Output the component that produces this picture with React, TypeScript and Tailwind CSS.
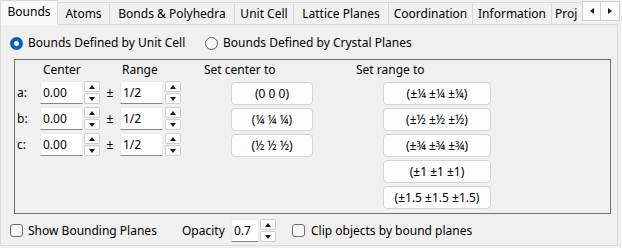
import React from "react";

const tabs = [
  { label: "Bounds", w: "w-[58px]" },
  { label: "Atoms", w: "w-[52px]" },
  { label: "Bonds & Polyhedra", w: "w-[125px]" },
  { label: "Unit Cell", w: "w-[59px]" },
  { label: "Lattice Planes", w: "w-[95px]" },
  { label: "Coordination", w: "w-[84px]" },
  { label: "Information", w: "w-[79px]" },
];

const Arrow: React.FC<{ dir: "up" | "down" | "left" | "right" }> = ({ dir }) => {
  const pts = {
    up: "0,4 3,0 6,4",
    down: "0,0 6,0 3,4",
    left: "4,0 4,6 0,3",
    right: "0,0 0,6 4,3",
  }[dir];
  const vertical = dir === "up" || dir === "down";
  return (
    <svg width={vertical ? 6 : 4} height={vertical ? 4 : 6} viewBox={vertical ? "0 0 6 4" : "0 0 4 6"}>
      <polygon points={pts} fill="#1a1a1a" />
    </svg>
  );
};

const Spin: React.FC = () => (
  <div className="flex flex-col gap-[1px] w-[16px] h-[23px]">
    <div className="h-[11px] flex items-center justify-center border border-[#cfcfcf] bg-[#fbfbfb] rounded-[2px]">
      <Arrow dir="up" />
    </div>
    <div className="h-[11px] flex items-center justify-center border border-[#cfcfcf] bg-[#fbfbfb] rounded-[2px]">
      <Arrow dir="down" />
    </div>
  </div>
);

const Field: React.FC<{ value: string; w: string }> = ({ value, w }) => (
  <div className={`${w} h-[23px] bg-white border border-[#ececec] border-b-[#868686] flex items-center pl-[2px]`}>
    {value}
  </div>
);

const Btn: React.FC<{ label: string; w: string }> = ({ label, w }) => (
  <div className={`${w} h-[23px] rounded-[4px] border border-[#d3d3d3] bg-[#fdfdfd] flex items-center justify-center`}>
    {label}
  </div>
);

const Check: React.FC = () => (
  <div className="w-[13px] h-[13px] rounded-[3px] border border-[#6f6f6f] bg-[#f7f7f7]" />
);

const rows = ["a:", "b:", "c:"];
const centers = ["(0 0 0)", "(¼ ¼ ¼)", "(½ ½ ½)"];
const ranges = ["(±¼ ±¼ ±¼)", "(±½ ±½ ±½)", "(±¾ ±¾ ±¾)", "(±1 ±1 ±1)", "(±1.5 ±1.5 ±1.5)"];

export default function App() {
  return (
    <div className="w-[622px] h-[248px] bg-[#f0f0f0] text-[12px] leading-[16px] text-black overflow-hidden font-['Noto_Sans',sans-serif]">
      {/* tab bar */}
      <div className="flex h-[24px] items-end">
        {tabs.map((t, i) =>
          i === 0 ? (
            <div
              key={t.label}
              className={`${t.w} h-[25px] -mb-px relative z-10 bg-[#f9f9f9] border border-b-0 border-[#d9d9d9] flex items-center justify-center pb-[2px]`}
            >
              {t.label}
            </div>
          ) : (
            <div
              key={t.label}
              className={`${t.w} h-[22px] border-t border-r border-[#d9d9d9] flex items-center justify-center`}
            >
              {t.label}
            </div>
          )
        )}
        <div className="w-[30px] h-[22px] border-t border-[#d9d9d9] flex items-center pl-[3px] whitespace-nowrap">
          Proj
        </div>
        <div className="self-start mt-[1px] flex relative z-10">
          <div className="w-[19px] h-[20px] bg-[#fbfbfb] border border-[#cfcfcf] flex items-center justify-center">
            <Arrow dir="left" />
          </div>
          <div className="w-[19px] h-[20px] bg-[#fbfbfb] border border-l-0 border-[#cfcfcf] flex items-center justify-center">
            <Arrow dir="right" />
          </div>
        </div>
      </div>

      {/* panel */}
      <div className="w-[618px] h-[222px] border border-[#d9d9d9] flex flex-col">
        <div className="mt-[8px] h-[20px] pl-[9px] flex items-center">
          <div className="w-[195px] flex items-center gap-[5px]">
            <div className="w-[13px] h-[13px] rounded-full bg-[#005fb8] flex items-center justify-center">
              <div className="w-[5px] h-[5px] rounded-full bg-white" />
            </div>
            <span>Bounds Defined by Unit Cell</span>
          </div>
          <div className="flex items-center gap-[5px]">
            <div className="w-[13px] h-[13px] rounded-full border border-[#5f5f5f] bg-[#f5f5f5]" />
            <span>Bounds Defined by Crystal Planes</span>
          </div>
        </div>

        {/* group box */}
        <div className="mt-[6px] ml-[13px] w-[597px] h-[155px] border border-[#707070] flex">
          <div className="w-[189px] flex flex-col">
            <div className="mt-[2px] h-[16px] flex">
              <span className="ml-[28px] w-[79px]">Center</span>
              <span>Range</span>
            </div>
            <div className="mt-[3px] flex flex-col gap-[3px]">
              {rows.map((r) => (
                <div key={r} className="flex items-center h-[23px]">
                  <span className="w-[25px] pl-[2px]">{r}</span>
                  <Field value="0.00" w="w-[43px]" />
                  <div className="ml-[1px]">
                    <Spin />
                  </div>
                  <span className="w-[20px] text-center">±</span>
                  <Field value="1/2" w="w-[43px]" />
                  <div className="ml-[2px]">
                    <Spin />
                  </div>
                </div>
              ))}
            </div>
          </div>
          <div className="w-[152px] flex flex-col">
            <div className="mt-[2px] h-[16px]">Set center to</div>
            <div className="mt-[4px] ml-[27px] flex flex-col gap-[3px]">
              {centers.map((c) => (
                <Btn key={c} label={c} w="w-[82px]" />
              ))}
            </div>
          </div>
          <div className="flex flex-col">
            <div className="mt-[2px] h-[16px]">Set range to</div>
            <div className="mt-[4px] ml-[27px] flex flex-col gap-[3px]">
              {ranges.map((c) => (
                <Btn key={c} label={c} w="w-[108px]" />
              ))}
            </div>
          </div>
        </div>

        {/* bottom row */}
        <div className="mt-[5px] pl-[9px] h-[23px] flex items-center">
          <div className="w-[172px] flex items-center gap-[5px]">
            <Check />
            <span>Show Bounding Planes</span>
          </div>
          <span className="w-[49px]">Opacity</span>
          <Field value="0.7" w="w-[28px]" />
          <div className="ml-[1px]">
            <Spin />
          </div>
          <div className="ml-[16px] flex items-center gap-[6px]">
            <Check />
            <span>Clip objects by bound planes</span>
          </div>
        </div>
      </div>
    </div>
  );
}
